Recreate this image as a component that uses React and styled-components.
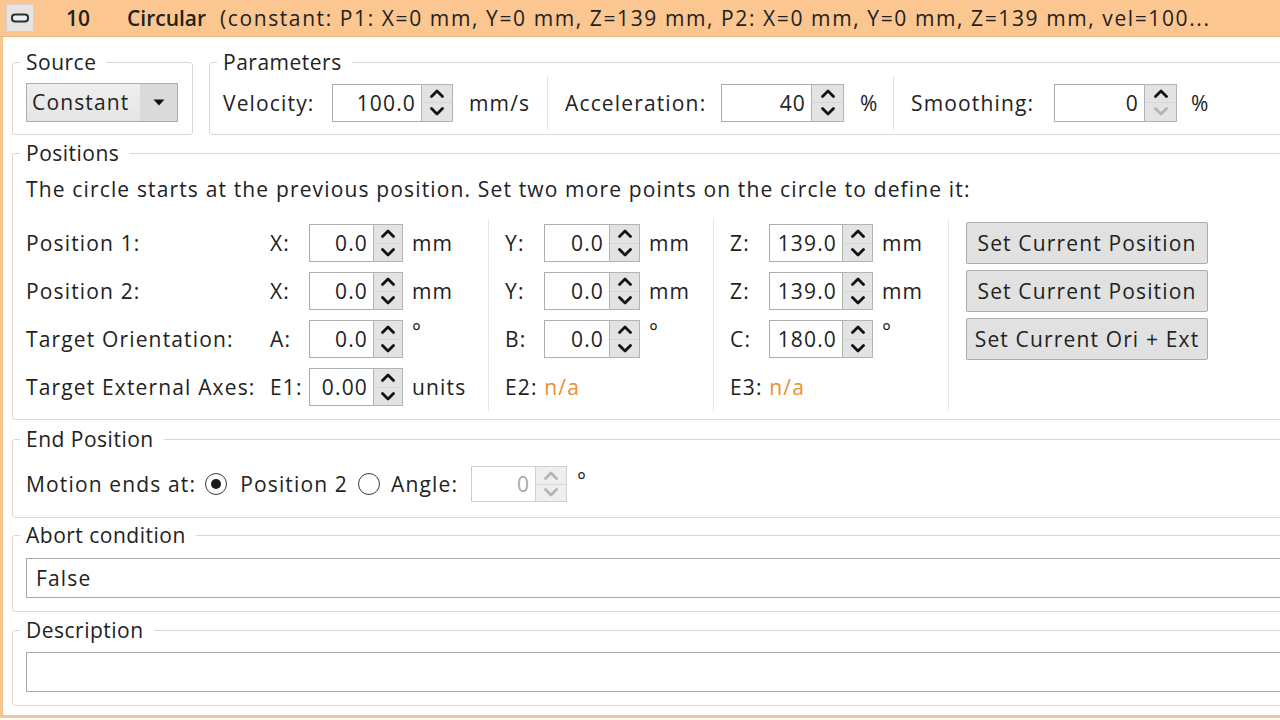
import React from "react";
import styled, { createGlobalStyle } from "styled-components";

const GlobalStyle = createGlobalStyle`
  html, body { margin: 0; padding: 0; background: #ffffff; }
  body {
    font-family: "Open Sans", "Noto Sans", sans-serif;
    font-size: 21px;
    letter-spacing: 1.15px;
    color: #222222;
  }
`;

const Panel = styled.div`
  width: 1280px;
  height: 718px;
  overflow: hidden;
  display: flex;
  flex-direction: column;
`;

const Header = styled.div`
  height: 37px;
  box-sizing: border-box;
  flex: none;
  display: flex;
  align-items: center;
  background: #fbc68f;
  border-bottom: 1px solid #f1b77c;
  white-space: nowrap;
`;

const CollapseButton = styled.div`
  width: 28px;
  height: 28px;
  box-sizing: border-box;
  margin: 0 0 0 6px;
  background: #e6e3e0;
  border: 1px solid #d8cfc6;
  display: flex;
  align-items: center;
  justify-content: center;
`;

const HeaderCell = styled.span`
  width: ${(p) => p.$w}px;
  flex: none;
  font-weight: 600;
  letter-spacing: 0;
  padding-left: ${(p) => p.$indent || 0}px;
  box-sizing: border-box;
`;

const Summary = styled.span`
  flex: 1;
  overflow: hidden;
  letter-spacing: 1.6px;
`;

const Body = styled.div`
  flex: 1;
  box-sizing: border-box;
  border-left: 3px solid #f7c58e;
  border-bottom: 3px solid #f3c897;
  padding: 12px 0 0 9px;
`;

const Stage = styled.div`
  width: 1300px;
  display: flex;
  flex-direction: column;
`;

const GroupRow = styled.div`
  display: flex;
  gap: 16px;
`;

const Group = styled.fieldset`
  margin: ${(p) => p.$mt || 0}px 0 0 0;
  min-width: 0;
  flex: ${(p) => (p.$grow ? 1 : "none")};
  width: ${(p) => (p.$w ? `${p.$w}px` : "auto")};
  box-sizing: border-box;
  border: 1px solid #d7d7d7;
  border-radius: 3px;
  box-shadow: inset 1px 1px 0 #ffffff;
  padding: ${(p) => p.$pt || 8}px 12px ${(p) => p.$pb || 12}px 13px;
`;

const Legend = styled.legend`
  margin-left: -6px;
  padding: 0 10px 0 6px;
  line-height: 26px;
  letter-spacing: 0.5px;
`;

/* ---- combo box ---- */
const Combo = styled.div`
  width: 152px;
  height: 39px;
  box-sizing: border-box;
  display: flex;
  border: 1px solid #acacac;
  background: linear-gradient(#efefef, #e5e5e5);
`;

const ComboText = styled.span`
  flex: 1;
  padding-left: 5px;
  line-height: 37px;
`;

const ComboArrow = styled.span`
  width: 37px;
  background: #dadada;
  display: flex;
  align-items: center;
  justify-content: center;
`;

/* ---- spin box ---- */
const Spin = styled.div`
  display: flex;
  height: ${(p) => p.$h || 38}px;
  flex: none;
  margin-left: ${(p) => p.$ml || 0}px;
`;

const Field = styled.div`
  width: ${(p) => p.$w}px;
  box-sizing: border-box;
  border: 1px solid ${(p) => (p.$disabled ? "#cfcfcf" : "#abadb3")};
  border-right: none;
  background: #ffffff;
  color: ${(p) => (p.$disabled ? "#a8a8a8" : "#222222")};
  padding-right: 5px;
  display: flex;
  align-items: center;
  justify-content: flex-end;
`;

const Arrows = styled.div`
  width: ${(p) => p.$w || 31}px;
  box-sizing: border-box;
  border: 1px solid ${(p) => (p.$disabled ? "#cfcfcf" : "#b3b3b3")};
  background: ${(p) => (p.$disabled ? "#eeeeee" : "#e3e3e3")};
  display: flex;
  flex-direction: column;
`;

const ArrowHalf = styled.div`
  flex: 1;
  display: flex;
  align-items: center;
  justify-content: center;
  & + & {
    border-top: 1px solid ${(p) => (p.$disabled ? "#d6d6d6" : "#c4c4c4")};
  }
`;

const Chevron = ({ up, off }) => (
  <svg width="14" height="9" viewBox="0 0 14 9">
    <polyline
      points={up ? "1.5,7.5 7,2 12.5,7.5" : "1.5,1.5 7,7 12.5,1.5"}
      fill="none"
      stroke={off ? "#b4b4b4" : "#111111"}
      strokeWidth="2.8"
      strokeLinecap="round"
      strokeLinejoin="round"
    />
  </svg>
);

const SpinBox = ({ value, w, aw, h, ml, disabled, downOff }) => (
  <Spin $h={h} $ml={ml}>
    <Field $w={w} $disabled={disabled}>
      {value}
    </Field>
    <Arrows $w={aw} $disabled={disabled}>
      <ArrowHalf $disabled={disabled}>
        <Chevron up off={disabled} />
      </ArrowHalf>
      <ArrowHalf $disabled={disabled}>
        <Chevron off={disabled || downOff} />
      </ArrowHalf>
    </Arrows>
  </Spin>
);

/* ---- parameters strip ---- */
const Strip = styled.div`
  display: flex;
  align-items: center;
  height: 39px;
`;

const FixedLabel = styled.span`
  width: ${(p) => p.$w}px;
  flex: none;
  white-space: nowrap;
`;

const Unit = styled.span`
  width: ${(p) => (p.$w ? `${p.$w}px` : "auto")};
  margin-left: ${(p) => p.$gap || 16}px;
  flex: none;
  white-space: nowrap;
`;

const VSep = styled.div`
  width: 1px;
  height: 54px;
  margin: -7px 17px -8px 16px;
  background: #e3e3e3;
  flex: none;
`;

/* ---- positions ---- */
const Intro = styled.div`
  line-height: 26px;
  white-space: nowrap;
`;

const Columns = styled.div`
  display: flex;
  margin-top: 17px;
`;

const Column = styled.div`
  width: ${(p) => (p.$w ? `${p.$w}px` : "auto")};
  flex: none;
  box-sizing: border-box;
  display: flex;
  flex-direction: column;
  border-left: ${(p) => (p.$sep ? "1px solid #e6e6e6" : "none")};
  padding-left: ${(p) => p.$pl || 0}px;
`;

const Cell = styled.div`
  height: 48px;
  display: flex;
  align-items: center;
  white-space: nowrap;
`;

const AxisLabel = styled.span`
  width: 39px;
  flex: none;
`;

const NotAvailable = styled.span`
  color: #e8902f;
`;

const ActionButton = styled.button`
  width: 242px;
  height: 42px;
  margin: 3px 0;
  box-sizing: border-box;
  border: 1px solid #adadad;
  border-radius: 2px;
  background: #e1e1e1;
  font: inherit;
  letter-spacing: inherit;
  color: #222222;
  padding: 0;
  white-space: nowrap;
`;

/* ---- end position ---- */
const EndRow = styled.div`
  display: flex;
  align-items: center;
  height: 40px;
  white-space: nowrap;
`;

const Radio = styled.span`
  width: 22px;
  height: 22px;
  box-sizing: border-box;
  border-radius: 50%;
  border: 1.5px solid #3a3a3a;
  background: #ffffff;
  flex: none;
  display: flex;
  align-items: center;
  justify-content: center;
  margin: 0 ${(p) => p.$after}px 0 ${(p) => p.$before}px;
  &::after {
    content: "";
    width: 10px;
    height: 10px;
    border-radius: 50%;
    background: ${(p) => (p.$on ? "#1a1a1a" : "transparent")};
  }
`;

const TextBox = styled.div`
  height: 40px;
  box-sizing: border-box;
  border: 1px solid #a9a9a9;
  background: #ffffff;
  padding-left: 9px;
  display: flex;
  align-items: center;
`;

const Degree = styled.span`
  margin-left: ${(p) => p.$gap || 8}px;
  align-self: flex-start;
  margin-top: 2px;
`;

const posRows = [
  "Position 1:",
  "Position 2:",
  "Target Orientation:",
  "Target External Axes:",
];

export default function App() {
  return (
    <>
      <GlobalStyle />
      <Panel>
        <Header>
          <CollapseButton>
            <svg width="18" height="10" viewBox="0 0 18 10">
              <rect x="1" y="1.5" width="16" height="7" rx="3" fill="#e8eef6" stroke="#2f2f2f" strokeWidth="2" />
            </svg>
          </CollapseButton>
          <HeaderCell $w={93} $indent={32}>10</HeaderCell>
          <HeaderCell $w={93}>Circular</HeaderCell>
          <Summary>
            (constant: P1: X=0 mm, Y=0 mm, Z=139 mm, P2: X=0 mm, Y=0 mm, Z=139 mm, vel=100...
          </Summary>
        </Header>

        <Body>
          <Stage>
            <GroupRow>
              <Group $w={181}>
                <Legend>Source</Legend>
                <Combo>
                  <ComboText>Constant</ComboText>
                  <ComboArrow>
                    <svg width="12" height="7" viewBox="0 0 12 7">
                      <polygon points="0.5,0.5 11.5,0.5 6,6.5" fill="#111" />
                    </svg>
                  </ComboArrow>
                </Combo>
              </Group>
              <Group $grow>
                <Legend>Parameters</Legend>
                <Strip>
                  <FixedLabel $w={109}>Velocity:</FixedLabel>
                  <SpinBox value="100.0" w={89} aw={32} />
                  <Unit $w={62}>mm/s</Unit>
                  <VSep />
                  <FixedLabel $w={156}>Acceleration:</FixedLabel>
                  <SpinBox value="40" w={90} aw={33} />
                  <Unit $w={17}>%</Unit>
                  <VSep />
                  <FixedLabel $w={143}>Smoothing:</FixedLabel>
                  <SpinBox value="0" w={90} aw={33} downOff />
                  <Unit $gap={14}>%</Unit>
                </Strip>
              </Group>
            </GroupRow>

            <Group $mt={5} $pt={10} $pb={8}>
              <Legend>Positions</Legend>
              <Intro>
                The circle starts at the previous position. Set two more points on the circle to define it:
              </Intro>
              <Columns>
                <Column $w={244}>
                  {posRows.map((label) => (
                    <Cell key={label}>{label}</Cell>
                  ))}
                </Column>
                <Column $w={218}>
                  <Cell>
                    <AxisLabel>X:</AxisLabel>
                    <SpinBox value="0.0" w={64} aw={30} />
                    <Unit $gap={9}>mm</Unit>
                  </Cell>
                  <Cell>
                    <AxisLabel>X:</AxisLabel>
                    <SpinBox value="0.0" w={64} aw={30} />
                    <Unit $gap={9}>mm</Unit>
                  </Cell>
                  <Cell>
                    <AxisLabel>A:</AxisLabel>
                    <SpinBox value="0.0" w={64} aw={30} />
                    <Degree $gap={9}>°</Degree>
                  </Cell>
                  <Cell>
                    <AxisLabel>E1:</AxisLabel>
                    <SpinBox value="0.00" w={64} aw={30} />
                    <Unit $gap={9}>units</Unit>
                  </Cell>
                </Column>
                <Column $w={225} $sep $pl={16}>
                  <Cell>
                    <AxisLabel>Y:</AxisLabel>
                    <SpinBox value="0.0" w={65} aw={31} />
                    <Unit $gap={9}>mm</Unit>
                  </Cell>
                  <Cell>
                    <AxisLabel>Y:</AxisLabel>
                    <SpinBox value="0.0" w={65} aw={31} />
                    <Unit $gap={9}>mm</Unit>
                  </Cell>
                  <Cell>
                    <AxisLabel>B:</AxisLabel>
                    <SpinBox value="0.0" w={65} aw={31} />
                    <Degree $gap={9}>°</Degree>
                  </Cell>
                  <Cell>
                    E2:&nbsp;<NotAvailable>n/a</NotAvailable>
                  </Cell>
                </Column>
                <Column $w={235} $sep $pl={16}>
                  <Cell>
                    <AxisLabel>Z:</AxisLabel>
                    <SpinBox value="139.0" w={73} aw={31} />
                    <Unit $gap={9}>mm</Unit>
                  </Cell>
                  <Cell>
                    <AxisLabel>Z:</AxisLabel>
                    <SpinBox value="139.0" w={73} aw={31} />
                    <Unit $gap={9}>mm</Unit>
                  </Cell>
                  <Cell>
                    <AxisLabel>C:</AxisLabel>
                    <SpinBox value="180.0" w={73} aw={31} />
                    <Degree $gap={9}>°</Degree>
                  </Cell>
                  <Cell>
                    E3:&nbsp;<NotAvailable>n/a</NotAvailable>
                  </Cell>
                </Column>
                <Column $sep $pl={17}>
                  <ActionButton>Set Current Position</ActionButton>
                  <ActionButton>Set Current Position</ActionButton>
                  <ActionButton>Set Current Ori + Ext</ActionButton>
                </Column>
              </Columns>
            </Group>

            <Group $mt={6} $pt={12} $pb={13}>
              <Legend>End Position</Legend>
              <EndRow>
                Motion ends at:
                <Radio $on $before={9} $after={13} />
                Position 2
                <Radio $before={10} $after={11} />
                Angle:
                <SpinBox value="0" w={64} aw={32} h={36} ml={13} disabled />
                <Degree $gap={10}>°</Degree>
              </EndRow>
            </Group>

            <Group $mt={4} $pt={10} $pb={13}>
              <Legend>Abort condition</Legend>
              <TextBox>False</TextBox>
            </Group>

            <Group $mt={5} $pt={9} $pb={13}>
              <Legend>Description</Legend>
              <TextBox />
            </Group>
          </Stage>
        </Body>
      </Panel>
    </>
  );
}
